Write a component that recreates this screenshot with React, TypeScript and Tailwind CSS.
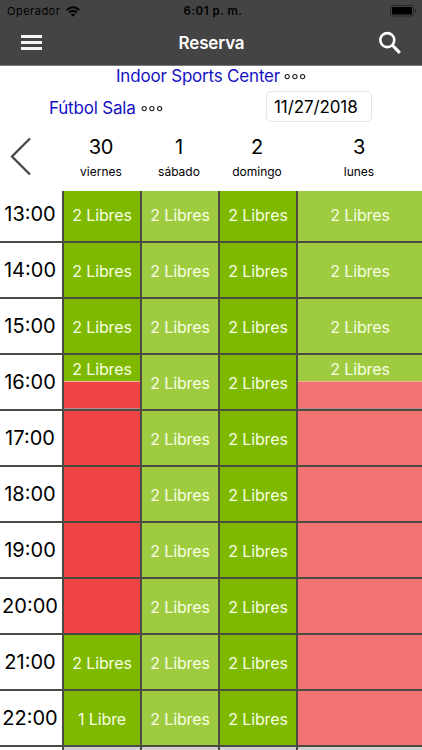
type Slot = { label?: string; busy?: boolean; split?: boolean };

const free: Slot = { label: "2 Libres" };
const one: Slot = { label: "1 Libre" };
const busy: Slot = { busy: true };
const split: Slot = { label: "2 Libres", split: true };

const days = [
  { n: "30", name: "viernes" },
  { n: "1", name: "sábado" },
  { n: "2", name: "domingo" },
  { n: "3", name: "lunes" },
];

const rows: { time: string; slots: Slot[] }[] = [
  { time: "13:00", slots: [free, free, free, free] },
  { time: "14:00", slots: [free, free, free, free] },
  { time: "15:00", slots: [free, free, free, free] },
  { time: "16:00", slots: [split, free, free, split] },
  { time: "17:00", slots: [busy, free, free, busy] },
  { time: "18:00", slots: [busy, free, free, busy] },
  { time: "19:00", slots: [busy, free, free, busy] },
  { time: "20:00", slots: [busy, free, free, busy] },
  { time: "21:00", slots: [free, free, free, busy] },
  { time: "22:00", slots: [one, free, free, busy] },
];

function Dots() {
  return (
    <svg width="22" height="8" viewBox="0 0 22 8" fill="none" stroke="#222" strokeWidth="1.1">
      <circle cx="3.2" cy="3.6" r="2.1" />
      <circle cx="10.9" cy="3.6" r="2.1" />
      <circle cx="18.6" cy="3.6" r="2.1" />
    </svg>
  );
}

function Cell({ slot, light, first }: { slot: Slot; light: boolean; first: boolean }) {
  const green = light ? "bg-[#9fcb41]" : "bg-[#7eb900]";
  const red = light ? "bg-[#f37373]" : "bg-[#ee4444]";
  return (
    <div className="flex min-w-0 flex-col border-l-2 border-[#4b4b43] text-[16px] leading-none tracking-[-0.1px] text-[#f7ffe2]">
      {slot.split ? (
        <>
          <div className={`flex h-[26px] items-center justify-center pt-[2px] ${green}`}>{slot.label}</div>
          <div className={`flex-1 border-y border-t-[#f3b293] border-b-[#b98a8a] ${red}`} />
        </>
      ) : (
        <div className={`flex flex-1 items-center justify-center ${first ? "pb-[3px]" : "pt-px"} ${slot.busy ? red : green}`}>
          {slot.label}
        </div>
      )}
    </div>
  );
}

export default function App() {
  return (
    <div className="flex h-[750px] w-[422px] flex-col overflow-hidden bg-white font-['Inter','Liberation_Sans',sans-serif] text-black">
      <header className="h-[66px] shrink-0 border-b border-[#777] bg-[#444]">
        <div className="grid h-[22px] grid-cols-3 items-center pl-[7px] pr-[5px] text-[11px]">
          <div className="flex items-center gap-[6px]">
            <span className="tracking-[0.5px]">Operador</span>
            <svg width="14" height="11" viewBox="0 0 14 11" fill="none" stroke="#000" strokeWidth="2">
              <path d="M.8 4.1Q7-1.6 13.2 4.1M3.1 6.6Q7 3.2 10.9 6.6" />
              <path d="M4.9 8.4Q7 6.8 9.1 8.4L7 10.7Z" fill="#000" stroke="none" />
            </svg>
          </div>
          <span className="pl-[2px] pt-[2px] text-center text-[11.5px] font-semibold leading-none tracking-[0.5px]">6:01 p. m.</span>
          <svg className="justify-self-end" width="27" height="12" viewBox="0 0 27 12">
            <rect x=".5" y=".5" width="23" height="10.5" rx="2.5" fill="none" stroke="#252525" />
            <rect x="2" y="2" width="20" height="7.5" rx="1.2" />
            <path d="M25 4v4q1.5-.7 1.5-2T25 4Z" fill="#222" />
          </svg>
        </div>
        <div className="grid h-[42px] grid-cols-3 items-center pl-[21px] pr-[20px]">
          <div className="flex w-[21px] flex-col gap-[3px] pb-px">
            <div className="h-[3px] bg-[#f4f4f4]" />
            <div className="h-[3px] bg-[#f4f4f4]" />
            <div className="h-[3px] bg-[#f4f4f4]" />
          </div>
          <h1 className="text-center text-[17px] font-semibold leading-none tracking-[-0.15px] text-white">Reserva</h1>
          <svg className="justify-self-end" width="24" height="24" viewBox="0 0 24 24" fill="none" stroke="#fff" strokeWidth="2.6">
            <circle cx="9.3" cy="9.1" r="7" />
            <path d="m14.2 14 7.6 7.8" strokeWidth="3.1" />
          </svg>
        </div>
      </header>

      <div className="flex h-[22px] shrink-0 items-center justify-center gap-[4px]">
        <span className="text-[17px] tracking-[-0.2px] text-[#1512c4]">Indoor Sports Center</span>
        <Dots />
      </div>
      <div className="flex h-[36px] shrink-0 items-center pl-[49px]">
        <div className="flex w-[217px] items-center gap-[5px] pt-[5px]">
          <span className="text-[17px] tracking-[-0.2px] text-[#1512c4]">Fútbol Sala</span>
          <Dots />
        </div>
        <div className="flex h-[31px] w-[106px] items-center rounded-[5px] border border-[#e4e4e4] pl-[7px] pt-[3px] text-[17px] leading-none tracking-[-0.1px]">
          11/27/2018
        </div>
      </div>

      <div className="grid h-[67px] shrink-0 grid-cols-[62px_78px_78px_78px_1fr]">
        <svg className="mt-[13px] ml-[10px]" width="22" height="39" viewBox="0 0 22 39" fill="none" stroke="#45454b" strokeWidth="2.3">
          <path d="M20 1.5 2 19.5l18 18" />
        </svg>
        {days.map((d) => (
          <div key={d.n} className="flex flex-col items-center pt-[12px]">
            <span className="text-[20px] leading-[22px] tracking-[-0.3px]">{d.n}</span>
            <span className="mt-[7px] text-[12px] leading-[14px]">{d.name}</span>
          </div>
        ))}
      </div>

      {rows.map((r, i) => (
        <div
          key={r.time}
          className={`grid shrink-0 grid-cols-[62px_78px_78px_78px_1fr] border-b-2 border-[#4b4b43] ${i === 0 ? "h-[52px]" : "h-[56px]"}`}
        >
          <div className={`flex items-center justify-center pr-[2px] text-[20px] ${i === 0 ? "pb-[4px]" : ""}`}>{r.time}</div>
          {r.slots.map((s, k) => (
            <Cell key={k} slot={s} light={k % 2 === 1} first={i === 0} />
          ))}
        </div>
      ))}
      <div className="grid flex-1 grid-cols-[62px_78px_78px_78px_1fr]">
        <div />
        {days.map((d) => (
          <div key={d.n} className="border-l-2 border-[#4b4b43] bg-[#d1d1d1]" />
        ))}
      </div>
    </div>
  );
}
